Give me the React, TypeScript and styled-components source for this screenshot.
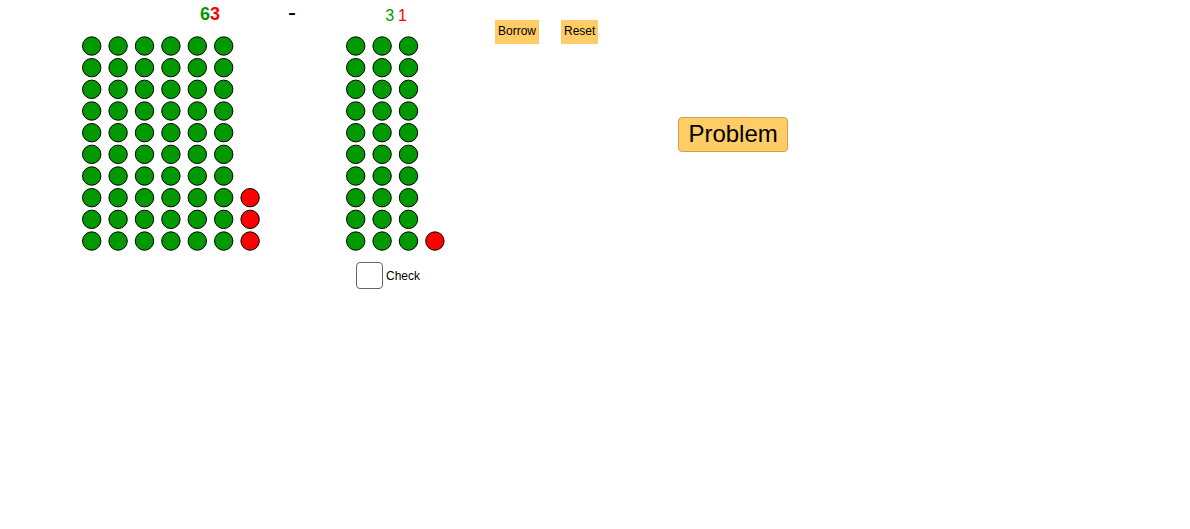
import React, { useState } from 'react'
import styled, { createGlobalStyle } from 'styled-components';

const GREEN = '#009900';
const RED = '#ff0000';

const ROWS = 10;
const COLUMN_STEP = 26.4;
const ROW_STEP = 21.67;

const GlobalStyle = createGlobalStyle`
    body {
        margin: 0;
        background: #fff;
        color: #000;
        font-family: "Liberation Sans", Arial, sans-serif;
        font-size: 12px;
    }
`

const Page = styled.main`
    display: flex;
    align-items: flex-start;
    padding-left: 82px;
`

const Board = styled.section``

const NumberRow = styled.div<{ $bold?: boolean }>`
    display: flex;
    justify-content: flex-end;
    gap: ${props => props.$bold ? '0' : '4px'};
    height: 36px;
    padding: 4px 40px 0 0;
    box-sizing: border-box;
    font-size: ${props => props.$bold ? '18px' : '16px'};
    font-weight: ${props => props.$bold ? 'bold' : 'normal'};
    line-height: ${props => props.$bold ? '20px' : '24px'};
`

const Digit = styled.span<{ $color: string }>`
    color: ${props => props.$color};
`

const Dots = styled.svg`
    display: block;
`

const Minus = styled.div`
    width: 8px;
    margin: 0 50px 0 28px;
    font-size: 24px;
    line-height: 24px;
`

const CheckRow = styled.label`
    display: flex;
    align-items: center;
    gap: 3px;
    margin: 10px 0 0 10px;
    line-height: 14px;
`

const CheckBox = styled.input`
    appearance: none;
    width: 27px;
    height: 27px;
    margin: 0;
    border: 1px solid #666;
    border-radius: 4px;
    background: #fff;

    &:checked {
        background: ${GREEN};
    }
`

const Actions = styled.div`
    display: flex;
    gap: 22px;
    margin: 20px 0 0 48px;
`

const ActionButton = styled.button`
    height: 24px;
    padding: 0 3px 2px;
    border: none;
    background: #ffcc66;
    color: #000;
    font: 12px/14px "Liberation Sans", Arial, sans-serif;
`

const ProblemButton = styled.button`
    height: 35px;
    margin: 117px 0 0 80px;
    padding: 0 9px 2px;
    border: 1px solid #c9a352;
    border-radius: 4px;
    background: #ffcc66;
    color: #000;
    font: 24px/28px "Liberation Sans", Arial, sans-serif;
`

interface DotGridProps {
    tens: number;
    ones: number;
    width: number;
}

// full columns are tens, the last column is filled from the bottom with ones
const DotGrid = ({ tens, ones, width }: DotGridProps) => {
    const dots: { column: number, row: number, color: string }[] = [];
    for (let column = 0; column < tens; column++) {
        for (let row = 0; row < ROWS; row++) {
            dots.push({ column, row, color: GREEN });
        }
    }
    for (let i = 0; i < ones; i++) {
        dots.push({ column: tens + Math.floor(i / ROWS), row: ROWS - 1 - i % ROWS, color: RED });
    }

    return (
        <Dots width={width} height={216} overflow="visible" role="img" aria-label={`${tens} tens and ${ones} ones`}>
            {dots.map(dot => (
                <circle
                    key={`${dot.column}-${dot.row}`}
                    cx={9.7 + dot.column * COLUMN_STEP}
                    cy={10 + dot.row * ROW_STEP}
                    r={9.2}
                    fill={dot.color}
                    stroke="#000"
                    strokeWidth={1}
                />
            ))}
        </Dots>
    )
}

const App = () => {
    const [top, setTop] = useState({ tens: 6, ones: 3 });
    const [bottom, setBottom] = useState({ tens: 3, ones: 1 });
    const [start, setStart] = useState(top);

    const borrow = () => {
        if (top.tens > 0 && top.ones < ROWS) {
            setTop({ tens: top.tens - 1, ones: top.ones + ROWS });
        }
    }

    const newProblem = () => {
        const next = { tens: 4 + Math.floor(Math.random() * 3), ones: Math.floor(Math.random() * 10) };
        setTop(next);
        setStart(next);
        setBottom({ tens: 1 + Math.floor(Math.random() * 3), ones: Math.floor(Math.random() * 10) });
    }

    return (
        <>
            <GlobalStyle />
            <Page>
                <Board>
                    <NumberRow $bold>
                        <Digit $color={GREEN}>{top.tens}</Digit>
                        <Digit $color={RED}>{top.ones}</Digit>
                    </NumberRow>
                    <DotGrid tens={top.tens} ones={top.ones} width={178} />
                </Board>
                <Minus>-</Minus>
                <Board>
                    <NumberRow>
                        <Digit $color={GREEN}>{bottom.tens}</Digit>
                        <Digit $color={RED}>{bottom.ones}</Digit>
                    </NumberRow>
                    <DotGrid tens={bottom.tens} ones={bottom.ones} width={101} />
                    <CheckRow>
                        <CheckBox type="checkbox" />
                        Check
                    </CheckRow>
                </Board>
                <Actions>
                    <ActionButton type="button" onClick={borrow}>Borrow</ActionButton>
                    <ActionButton type="button" onClick={() => setTop(start)}>Reset</ActionButton>
                </Actions>
                <ProblemButton type="button" onClick={newProblem}>Problem</ProblemButton>
            </Page>
        </>
    )
}

export default App
